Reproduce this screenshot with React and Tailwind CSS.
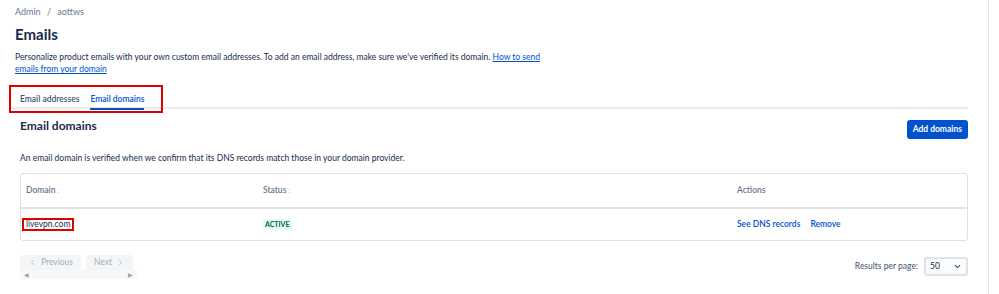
import { ChevronLeft, ChevronRight, ChevronDown } from "lucide-react";

const font = { fontFamily: 'Lato, "Noto Sans", sans-serif' };

function SortDots() {
  return <span className="ml-[2px] text-[7px] text-[#c1c7d0]">:</span>;
}

export default function App() {
  return (
    <div className="w-[999px] h-[294px] bg-white overflow-hidden" style={font}>
      <div className="w-[989px] h-full border-r border-[#e4e6ea] pl-[15px] pr-[20px] pt-[6px]">
        {/* breadcrumb */}
        <div className="text-[9px] leading-[12px] text-[#6b778c]">
          Admin <span className="mx-[4px]">/</span> aottws
        </div>
        <h1 className="mt-[7px] text-[15px] leading-[18px] font-bold text-[#172b4d]">Emails</h1>
        <p className="mt-[8px] w-[535px] text-[8.5px] leading-[12px] text-[#172b4d]">
          Personalize product emails with your own custom email addresses. To add an email address, make sure we've verified its domain.{" "}
          <a className="text-[#0052cc] underline">How to send emails from your domain</a>
        </p>

        {/* tabs */}
        <div className="mt-[10px] flex items-end border-b-2 border-[#ebecf0] ml-[-6px]">
          <div className="flex items-center gap-[11px] border-2 border-[#e00000] h-[28px] pl-[9px] pr-[17px] mb-[-6px]">
            <span className="text-[8.5px] text-[#42526e] font-semibold">Email addresses</span>
            <span className="relative text-[8.5px] text-[#0052cc] font-semibold">
              Email domains
              <span className="absolute left-0 right-0 bottom-[-5px] h-[2px] bg-[#0052cc]" />
            </span>
          </div>
        </div>

        {/* section */}
        <div className="pl-[5px] pt-[9px]">
          <div className="flex items-start justify-between">
            <h2 className="text-[12px] leading-[16px] font-bold text-[#172b4d]">Email domains</h2>
            <button className="mt-[2px] h-[19px] px-[6px] rounded-[3px] bg-[#0052cc] text-white text-[8.5px] font-bold">
              Add domains
            </button>
          </div>
          <p className="mt-[13px] text-[8.5px] leading-[12px] text-[#172b4d]">
            An email domain is verified when we confirm that its DNS records match those in your domain provider.
          </p>

          {/* table */}
          <div className="mt-[9px] border border-[#dfe1e6] rounded-[3px] text-[8.5px]">
            <div className="grid grid-cols-[237px_474px_1fr] h-[35px] items-center border-b-2 border-[#dfe1e6] text-[#6b778c] font-semibold">
              <div className="pl-[5px]">Domain<SortDots /></div>
              <div className="pl-[5px]">Status<SortDots /></div>
              <div className="pl-[5px]">Actions</div>
            </div>
            <div className="grid grid-cols-[237px_474px_1fr] h-[31px] items-center">
              <div className="pl-[1px]">
                <span className="inline-block border-2 border-[#e00000] px-[2px] leading-[9px] text-[#172b4d]">livevpn.com</span>
              </div>
              <div className="pl-[5px]">
                <span className="inline-block bg-[#e3fcef] text-[#006644] text-[7px] font-bold px-[2px] leading-[10px]">ACTIVE</span>
              </div>
              <div className="pl-[5px] flex gap-[10px] text-[#0052cc] font-semibold">
                <span>See DNS records</span>
                <span>Remove</span>
              </div>
            </div>
          </div>

          {/* pagination */}
          <div className="mt-[14px] flex items-start justify-between">
            <div className="w-[117px]">
              <div className="flex gap-[5px]">
                <div className="h-[15px] w-[61px] bg-[#f4f5f7] rounded-[2px] flex items-center justify-center gap-[4px] text-[8.5px] text-[#a5adba]">
                  <ChevronLeft size={9} strokeWidth={2} />
                  Previous
                </div>
                <div className="h-[15px] w-[47px] bg-[#f4f5f7] rounded-[2px] flex items-center justify-center gap-[4px] text-[8.5px] text-[#a5adba]">
                  Next
                  <ChevronRight size={9} strokeWidth={2} />
                </div>
              </div>
              <div className="h-[9px] bg-[#f7f8f9] flex items-center justify-between px-[4px] text-[6px] text-[#9aa0a6]">
                <span>◀</span>
                <span>▶</span>
              </div>
            </div>
            <div className="flex items-center gap-[6px] mt-[2px]">
              <span className="text-[8.5px] text-[#42526e]">Results per page:</span>
              <div className="h-[19px] w-[44px] bg-[#fafbfc] border-2 border-[#dfe1e6] rounded-[3px] flex items-center justify-between px-[4px] text-[8.5px] text-[#172b4d]">
                <span>50</span>
                <ChevronDown size={9} strokeWidth={3} className="text-[#42526e]" />
              </div>
            </div>
          </div>
        </div>
      </div>
    </div>
  );
}
